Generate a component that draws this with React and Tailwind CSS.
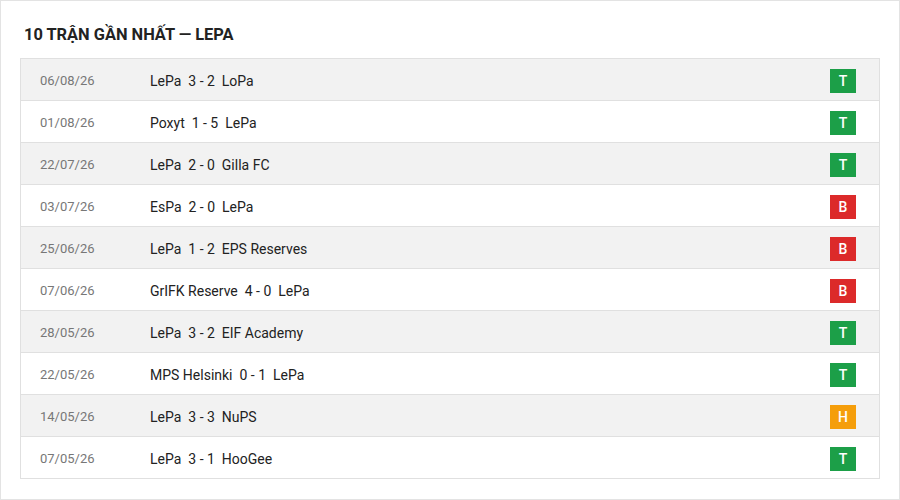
const matches = [
  { date: '06/08/26', home: 'LePa', score: '3 - 2', away: 'LoPa', result: 'T' },
  { date: '01/08/26', home: 'Poxyt', score: '1 - 5', away: 'LePa', result: 'T' },
  { date: '22/07/26', home: 'LePa', score: '2 - 0', away: 'Gilla FC', result: 'T' },
  { date: '03/07/26', home: 'EsPa', score: '2 - 0', away: 'LePa', result: 'B' },
  { date: '25/06/26', home: 'LePa', score: '1 - 2', away: 'EPS Reserves', result: 'B' },
  { date: '07/06/26', home: 'GrIFK Reserve', score: '4 - 0', away: 'LePa', result: 'B' },
  { date: '28/05/26', home: 'LePa', score: '3 - 2', away: 'EIF Academy', result: 'T' },
  { date: '22/05/26', home: 'MPS Helsinki', score: '0 - 1', away: 'LePa', result: 'T' },
  { date: '14/05/26', home: 'LePa', score: '3 - 3', away: 'NuPS', result: 'H' },
  { date: '07/05/26', home: 'LePa', score: '3 - 1', away: 'HooGee', result: 'T' },
];

const badgeColors = {
  T: 'bg-[#1c9f48]',
  B: 'bg-[#dc2a2a]',
  H: 'bg-[#f59e0b]',
};

const App = () => {
  return (
    <div className="w-[900px] h-[500px] bg-white" style={{ fontFamily: 'Roboto, "Noto Sans", sans-serif' }}>
      <div className="w-[900px] h-[500px] border border-[#e3e3e3] px-[19px] pt-[24px]">
        <h1 className="pl-1 text-[16.4px] leading-[20px] font-bold text-[#222] uppercase mb-[13px]">
          10 Trận gần nhất — LePa
        </h1>
        <div className="border-b border-[#e0e0e0]">
          {matches.map((m, index) => (
            <div
              key={index}
              className={`h-[42px] flex items-center border-t border-x border-[#e0e0e0] pl-[19px] pr-[23px] pt-[3px] ${
                index % 2 === 0 ? 'bg-[#f2f2f2]' : 'bg-white'
              }`}
            >
              <div className="w-[110px] text-[13px] text-[#777]">{m.date}</div>
              <div className="flex-1 text-[14px] text-[#222]">
                {m.home}&nbsp; {m.score}&nbsp; {m.away}
              </div>
              <div
                className={`w-[26px] h-[24px] flex items-center justify-center text-white text-[14px] font-medium ${badgeColors[m.result]}`}
              >
                {m.result}
              </div>
            </div>
          ))}
        </div>
      </div>
    </div>
  );
};

export default App;
